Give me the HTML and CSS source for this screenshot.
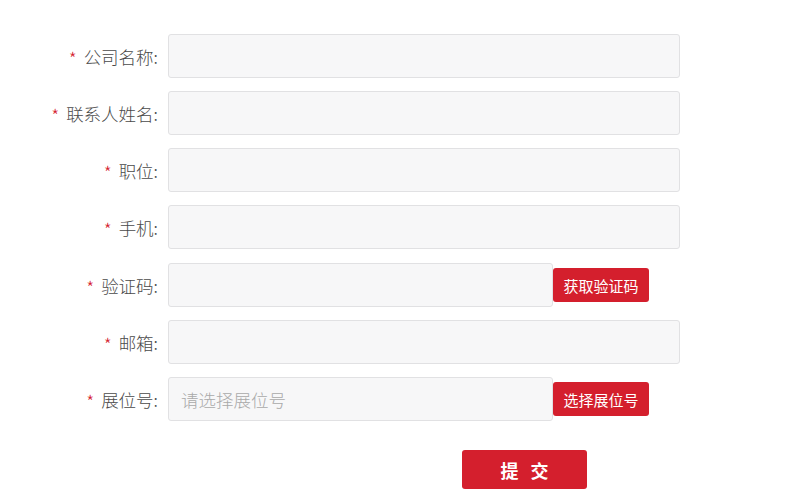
FILE: index.html
```html
<!DOCTYPE html>
<html lang="zh">
<head>
<meta charset="utf-8">
<link rel="stylesheet" href="styles.css">
</head>
<body>
<form class="form">
  <div class="row">
    <label class="label"><span class="req">*</span>公司名称:</label>
    <input class="input" type="text">
  </div>
  <div class="row">
    <label class="label"><span class="req">*</span>联系人姓名:</label>
    <input class="input" type="text">
  </div>
  <div class="row">
    <label class="label"><span class="req">*</span>职位:</label>
    <input class="input" type="text">
  </div>
  <div class="row">
    <label class="label"><span class="req">*</span>手机:</label>
    <input class="input" type="text">
  </div>
  <div class="row">
    <label class="label"><span class="req">*</span>验证码:</label>
    <input class="input short" type="text">
    <button type="button" class="btn-small">获取验证码</button>
  </div>
  <div class="row">
    <label class="label"><span class="req">*</span>邮箱:</label>
    <input class="input" type="text">
  </div>
  <div class="row">
    <label class="label"><span class="req">*</span>展位号:</label>
    <input class="input short" type="text" placeholder="请选择展位号">
    <button type="button" class="btn-small">选择展位号</button>
  </div>
  <div class="submit-row">
    <button type="button" class="btn-submit">提 交</button>
  </div>
</form>
</body>
</html>
```
FILE: styles.css
```css
* { box-sizing: border-box; }
html, body { margin: 0; padding: 0; background: #fff; }
body {
  font-family: "Microsoft YaHei", "Noto Sans CJK SC", "Liberation Sans", sans-serif;
  color: #555;
}
.form {
  padding-top: 34px;
  display: flex;
  flex-direction: column;
  gap: 13px;
}
.row {
  display: flex;
  align-items: center;
  height: 44px;
}
.row:nth-child(n+5) {
  margin-top: 1px;
  margin-bottom: -1px;
}
.label {
  width: 160px;
  padding-right: 2px;
  text-align: right;
  font-size: 17.5px;
  font-weight: 300;
  color: #4a4a4a;
  margin-right: 8px;
  white-space: nowrap;
}
.req {
  color: #d4202c;
  font-size: 18px;
  margin-right: 7px;
  position: relative;
  top: 2px;
}
.input {
  width: 512px;
  height: 44px;
  border: 1px solid #e1e1e3;
  border-radius: 3px;
  background: #f7f7f8;
  font-size: 17.5px;
  font-weight: 300;
  padding: 0 12px;
  font-family: inherit;
  color: #555;
  outline: none;
}
.input.short {
  width: 385px;
}
.input::placeholder {
  color: #a9a9a9;
}
.btn-small {
  height: 34px;
  width: 96px;
  border: none;
  border-radius: 3px;
  background: #d41f2d;
  color: #fff;
  font-family: inherit;
  font-size: 15px;
  padding: 0;
}
.submit-row {
  display: flex;
  padding-left: 462px;
  margin-top: 17px;
}
.btn-submit {
  width: 125px;
  height: 39px;
  border: none;
  border-radius: 3px;
  background: #d41f2d;
  color: #fff;
  font-family: inherit;
  font-size: 18px;
  font-weight: bold;
  letter-spacing: 4px;
  padding: 0 0 0 4px;
}
```
